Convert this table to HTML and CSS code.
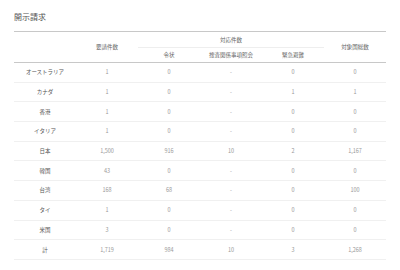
FILE: index.html
```html
<!DOCTYPE html>
<html lang="ja">
<head>
    <meta charset="UTF-8">
    <title>開示請求</title>
    <link rel="stylesheet" href="styles.css">
</head>
<body>
    <div class="report">
        <h1>開示請求</h1>
        <table class="stats">
            <thead>
                <tr class="head-top">
                    <th rowspan="2"></th>
                    <th rowspan="2">要請件数</th>
                    <th colspan="3" class="group">対応件数</th>
                    <th rowspan="2">対象国総数</th>
                </tr>
                <tr class="head-sub">
                    <th>令状</th>
                    <th>捜査関係事項照会</th>
                    <th>緊急避難</th>
                </tr>
            </thead>
            <tbody>
                <tr><td class="country">オーストラリア</td><td>1</td><td>0</td><td>-</td><td>0</td><td>0</td></tr>
                <tr><td class="country">カナダ</td><td>1</td><td>0</td><td>-</td><td>1</td><td>1</td></tr>
                <tr><td class="country">香港</td><td>1</td><td>0</td><td>-</td><td>0</td><td>0</td></tr>
                <tr><td class="country">イタリア</td><td>1</td><td>0</td><td>-</td><td>0</td><td>0</td></tr>
                <tr><td class="country">日本</td><td>1,500</td><td>916</td><td>10</td><td>2</td><td>1,167</td></tr>
                <tr><td class="country">韓国</td><td>43</td><td>0</td><td>-</td><td>0</td><td>0</td></tr>
                <tr><td class="country">台湾</td><td>168</td><td>68</td><td>-</td><td>0</td><td>100</td></tr>
                <tr><td class="country">タイ</td><td>1</td><td>0</td><td>-</td><td>0</td><td>0</td></tr>
                <tr><td class="country">米国</td><td>3</td><td>0</td><td>-</td><td>0</td><td>0</td></tr>
                <tr><td class="country">計</td><td>1,719</td><td>984</td><td>10</td><td>3</td><td>1,268</td></tr>
            </tbody>
        </table>
    </div>
</body>
</html>
```

FILE: styles.css
```css
body {
    margin: 0;
    padding: 0;
    background-color: #fff;
    font-family: "Noto Sans CJK JP", "Noto Sans", sans-serif;
}
.report {
    padding: 0 14px;
}
h1 {
    margin: 0 0 8px;
    padding-top: 11px;
    font-size: 8px;
    line-height: 12px;
    font-weight: normal;
    color: #555;
}
.stats {
    width: 372px;
    table-layout: fixed;
    border-collapse: collapse;
    border-top: 1px solid #c8c8c8;
}
.stats th,
.stats td {
    padding: 0;
    text-align: center;
    font-size: 5.5px;
    font-weight: normal;
    line-height: 8px;
}
.stats th {
    color: #666;
}
.head-top th {
    height: 15px;
    border-bottom: 1px solid #c8c8c8;
}
.head-top th.group {
    border-bottom: 1px solid #eee;
}
.head-sub th {
    height: 14px;
    border-bottom: 1px solid #c8c8c8;
}
.stats td {
    height: 18.7px;
    color: #999;
    border-bottom: 1px solid #f0f0f0;
}
.stats td.country {
    color: #555;
}
```
